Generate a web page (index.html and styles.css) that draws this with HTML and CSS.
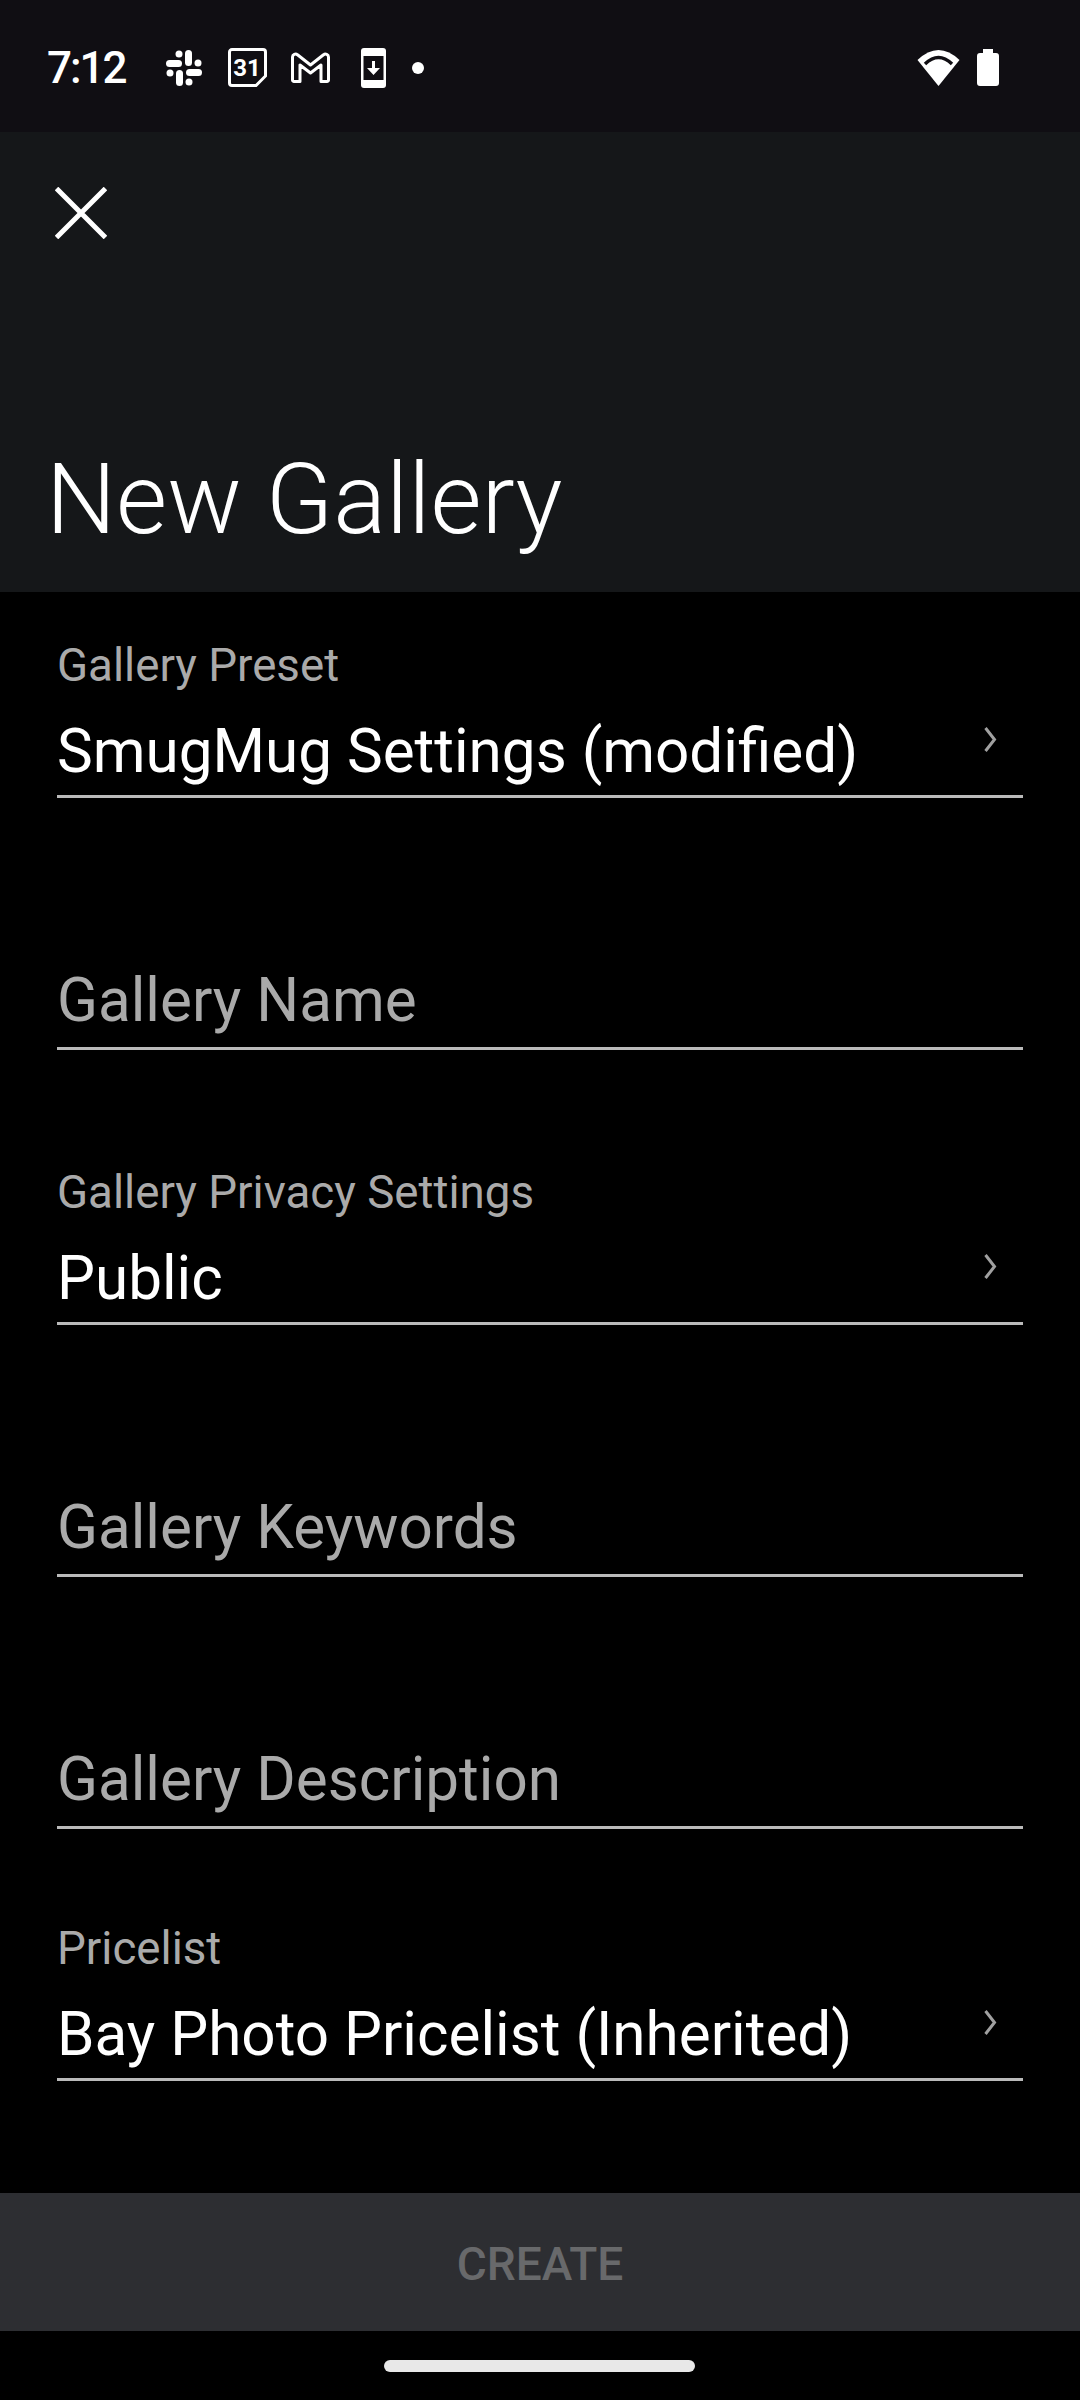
FILE: index.html
```html
<!DOCTYPE html>
<html lang="en">
<head>
<meta charset="utf-8">
<title>New Gallery</title>
<link rel="stylesheet" href="styles.css">
</head>
<body>
<div class="phone">
  <header class="status">
    <span class="time">7:12</span>
    <div class="notifs">
      <svg class="slack" width="36" height="36" viewBox="0 0 36 36" fill="#fff"><rect x="0" y="10" width="16" height="7" rx="3.5"/><circle cx="13" cy="4" r="3.5"/><rect x="19" y="0" width="7" height="16" rx="3.500"/><circle cx="32" cy="13" r="3.5"/><rect x="20" y="19" width="16" height="7" rx="3.5"/><circle cx="23" cy="32" r="3.5"/><rect x="10" y="20" width="7" height="16" rx="3.5"/><circle cx="4" cy="23" r="3.5"/></svg>
      <svg class="cal" width="39" height="39" viewBox="0 0 39 39"><path d="M4 1.500h31a2.500 2.500 0 0 1 2.500 2.500v24L28 37.500H4A2.500 2.500 0 0 1 1.500 35V4A2.500 2.500 0 0 1 4 1.500z" fill="none" stroke="#fff" stroke-width="3"/><text class="cal-text" x="19" y="28">31</text></svg>
      <svg class="gmail" width="39" height="31" viewBox="0 0 39 31"><path d="M1.500 5a3 3 0 0 1 5-2.200L19.500 13 32.500 2.800a3 3 0 0 1 5 2.200v23a1.500 1.500 0 0 1-1.500 1.500h-6V13L19.500 21 9 13v16.500H3A1.500 1.500 0 0 1 1.500 28z" fill="none" stroke="#fff" stroke-width="3" stroke-linejoin="round"/></svg>
      <svg class="dl" width="25" height="40" viewBox="0 0 25 40"><rect width="25" height="40" rx="3" fill="#fff"/><rect x="2.500" y="8" width="20" height="24" fill="#100e13"/><path d="M11 13h3v7h5l-6.500 7L6 20h5z" fill="#fff"/></svg>
      <span class="dot"></span>
    </div>
    <div class="sys">
      <svg width="43" height="36" viewBox="0 0 43 36"><path d="M0.500 10Q21.500-10 42.500 10L21.500 36z" fill="#fff"/><path d="M8 14Q21.500 1 35 14" fill="none" stroke="#100e13" stroke-width="3.500"/></svg>
      <svg width="22" height="37" viewBox="0 0 22 37" fill="#fff"><path d="M6 0h10v4h3a3 3 0 0 1 3 3v27a3 3 0 0 1-3 3H3a3 3 0 0 1-3-3V7a3 3 0 0 1 3-3h3z"/></svg>
    </div>
  </header>
  <section class="appbar">
    <svg class="close" width="52" height="52" viewBox="0 0 52 52" fill="none" stroke="#fff" stroke-width="5"><path d="M1.500 1.500l49 49M50.500 1.500l-49 49"/></svg>
    <h1>New Gallery</h1>
  </section>
  <main class="form">
    <div class="field f1"><div class="label">Gallery Preset</div><div class="value">SmugMug Settings (modified)<svg class="chev" width="13" height="25" viewBox="0 0 13 25" fill="none" stroke="#a0a0a0" stroke-width="3"><path d="M1.500 1L10.500 12.500L1.500 24"/></svg></div></div>
    <div class="field f2"><div class="ph">Gallery Name</div></div>
    <div class="field f3"><div class="label">Gallery Privacy Settings</div><div class="value">Public<svg class="chev" width="13" height="25" viewBox="0 0 13 25" fill="none" stroke="#a0a0a0" stroke-width="3"><path d="M1.500 1L10.500 12.500L1.500 24"/></svg></div></div>
    <div class="field f4"><div class="ph">Gallery Keywords</div></div>
    <div class="field f5"><div class="ph">Gallery Description</div></div>
    <div class="field f6"><div class="label">Pricelist</div><div class="value">Bay Photo Pricelist (Inherited)<svg class="chev" width="13" height="25" viewBox="0 0 13 25" fill="none" stroke="#a0a0a0" stroke-width="3"><path d="M1.500 1L10.500 12.500L1.500 24"/></svg></div></div>
  </main>
  <button class="create">CREATE</button>
  <footer class="nav"><span class="pill"></span></footer>
</div>
</body>
</html>
```
FILE: styles.css
```css
* { box-sizing: border-box; }
html, body { margin: 0; padding: 0; background: #000; }
body { font-family: Roboto, sans-serif; color: #fff; }
.phone { width: 1080px; height: 2400px; display: flex; flex-direction: column; background: #000; }
.status { height: 132px; flex: none; background: #100e13; display: flex; align-items: center; padding: 3px 81px 0 47px; }
.time { font-size: 44px; font-weight: 500; letter-spacing: -2px; width: 119px; }
.notifs { display: flex; align-items: center; flex: 1; }
.notifs svg { display: block; }
.cal { margin-left: 26px; }
.gmail { margin-left: 24px; }
.dl { margin-left: 31px; }
.cal-text { font-size: 24px; font-weight: 700; fill: #fff; text-anchor: middle; }
.dot { width: 12px; height: 12px; border-radius: 50%; background: #fff; margin-left: 26px; }
.sys { display: flex; align-items: center; gap: 17px; }
.appbar { height: 460px; flex: none; background: #151719; padding: 55px 0 0 55px; display: flex; flex-direction: column; }
.close { display: block; }
h1 { margin: 204px 0 0 -9px; font-size: 98.7px; font-weight: 300; line-height: 112px; }
.form { flex: 1; padding: 0 57px; display: flex; flex-direction: column; }
.field { border-bottom: 3px solid #bababa; display: flex; flex-direction: column; justify-content: flex-end; }
.f1 { height: 206px; }
.f2 { height: 252px; }
.f3 { height: 275px; }
.f4 { height: 252px; }
.f5 { height: 252px; }
.f6 { height: 252px; }
.label { font-size: 45.7px; color: #aaa; line-height: 50px; margin-bottom: 23px; }
.value { font-size: 60.2px; line-height: 76px; padding-bottom: 5px; display: flex; justify-content: space-between; align-items: flex-start; }
.ph { font-size: 60.2px; color: #aaa; line-height: 76px; padding-bottom: 8px; }
.chev { margin: 13px 26px 0 0; }
.create { height: 138px; flex: none; border: 0; padding: 4px 0 0; background: #2d2e32; color: #68696b; font: 500 46px Roboto, sans-serif; }
.nav { height: 69px; flex: none; display: flex; justify-content: center; align-items: center; padding-right: 2px; background: #000; }
.pill { width: 311px; height: 12px; border-radius: 6px; background: #e8e8e8; }
```
